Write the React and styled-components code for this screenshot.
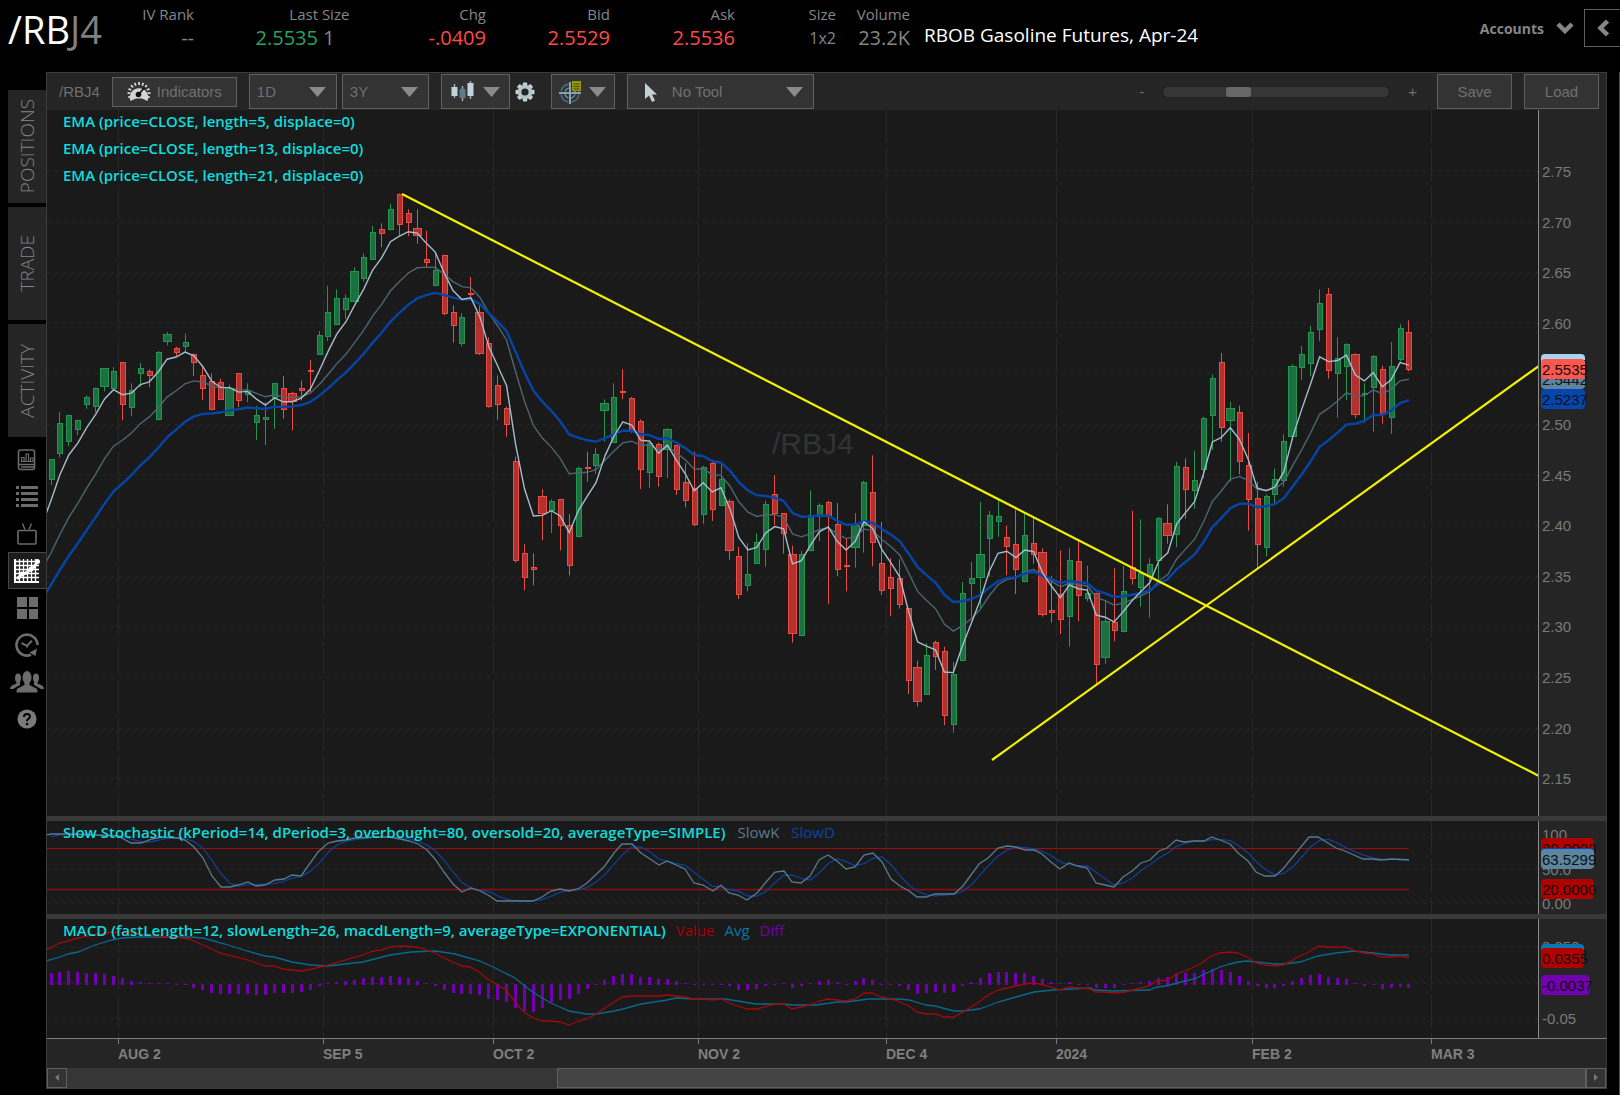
import React from "react";
import styled, { createGlobalStyle } from "styled-components";

const sans = '"Open Sans", "Noto Sans", sans-serif';
const arial = '"Liberation Sans", Arial, sans-serif';

const c = {
  panel: "#252525",
  plot: "#1a1a1a",
  line: "#3c3c3c",
  grid: "#282828",
  control: "#333333",
  edge: "#606060",
  muted: "#707070",
  label: "#868686",
  up: "#25a562",
  down: "#ff4a42",
  cyan: "#0cdede",
};

const Global = createGlobalStyle`
  *, *::before, *::after { box-sizing: border-box; }
  body { margin: 0; background: #000; font-family: ${sans}; }
  button, select, input { font: inherit; color: inherit; margin: 0; }
`;

/* ---------- page shell ---------- */

const Page = styled.div`
  display: flex;
  flex-direction: column;
  min-height: 100vh;
  background: #000;
`;

const Header = styled.header`
  display: flex;
  height: 72px;
  padding-left: 8px;
`;

const Symbol = styled.h1`
  margin: 0;
  width: 96px;
  font-size: 38px;
  line-height: 58px;
  font-weight: 400;
  color: #fff;
  span { color: #808080; }
`;

const Quote = styled.div`
  display: flex;
  flex-direction: column;
  padding-top: 4px;
  width: ${(p) => p.$w}px;
  text-align: ${(p) => (p.$left ? "left" : "right")};
  white-space: nowrap;
`;

const QuoteLabel = styled.span`
  font-size: 15px;
  line-height: 20px;
  color: ${c.label};
`;

const QuoteValue = styled.span`
  font-size: ${(p) => (p.$small ? 16 : 20)}px;
  line-height: 28px;
  color: ${(p) => p.$color || c.label};
`;

const Instrument = styled.p`
  margin: 0 auto 0 14px;
  font-size: 19px;
  line-height: 70px;
  color: #fff;
  white-space: nowrap;
`;

const AccountsButton = styled.button`
  display: flex;
  align-items: center;
  gap: 12px;
  height: 56px;
  padding: 0;
  margin-right: 10px;
  border: 0;
  background: none;
  color: ${c.label};
  font-weight: 700;
  font-size: 14px;
`;

const CollapseButton = styled.button`
  display: grid;
  place-items: center;
  width: 36px;
  height: 38px;
  margin-top: 9px;
  padding: 0;
  border: 1px solid ${c.edge};
  border-right: 0;
  background: #000;
  color: ${c.label};
`;

const Body = styled.div`
  display: flex;
  flex: 1;
  align-items: flex-start;
  padding-right: 12px;
  border-right: 1px solid #505050;
`;

/* ---------- left rail ---------- */

const Rail = styled.nav`
  display: flex;
  flex-direction: column;
  width: 46px;
  padding: 18px 0 0 8px;
`;

const RailTab = styled.button`
  height: 113px;
  margin-bottom: 4px;
  padding: 0;
  border: 0;
  background: #252525;
  color: ${c.label};
  font-size: 19px;
  font-weight: 300;
  display: grid;
  place-items: center;
  span { writing-mode: vertical-rl; transform: rotate(180deg); line-height: 24px; }
`;

const RailIcons = styled.div`
  display: flex;
  flex-direction: column;
`;

const RailIcon = styled.button`
  display: grid;
  place-items: center;
  height: 37px;
  padding: 0 2px 0 0;
  border: 1px solid ${(p) => (p.$active ? "#484848" : "transparent")};
  border-right: 0;
  background: ${(p) => (p.$active ? "#1c1c1c" : "none")};
  color: ${(p) => (p.$active ? "#fff" : "#6c6c6c")};
`;

/* ---------- chart panel ---------- */

const Panel = styled.main`
  flex: 1;
  min-width: 0;
  background: ${c.panel};
  border: 1px solid ${c.line};
`;

const Toolbar = styled.div`
  display: flex;
  align-items: center;
  height: 37px;
  padding: 0 7px 0 12px;
  color: ${c.muted};
  font-family: ${arial};
  font-size: 15px;
`;

const Group = styled.div`
  display: flex;
  align-items: center;
  gap: ${(p) => p.$gap || 5}px;
  margin-right: ${(p) => p.$end || 12}px;
`;

const ToolButton = styled.button`
  display: flex;
  align-items: center;
  justify-content: center;
  gap: 6px;
  width: ${(p) => p.$w}px;
  height: ${(p) => (p.$low ? 30 : 35)}px;
  padding: 0;
  border: 1px solid ${c.edge};
  background: ${c.control};
`;

const PlainButton = styled.button`
  display: grid;
  padding: 0;
  border: 0;
  background: none;
`;

const SelectBox = styled.label`
  display: grid;
  align-items: center;
  width: ${(p) => p.$w}px;
  height: 35px;
  border: 1px solid ${c.edge};
  background: ${c.control};
  > * { grid-area: 1 / 1; }
  > svg { pointer-events: none; }
`;

const Select = styled.select`
  width: 100%;
  height: 100%;
  padding: 0 0 0 ${(p) => p.$pad || 7}px;
  border: 0;
  background: none;
  appearance: none;
  outline: 0;
`;

const Caret = styled.svg`
  justify-self: end;
  margin-right: ${(p) => p.$right || 0}px;
`;

const LeadIcon = styled.svg`
  margin-left: 14px;
`;

const Zoom = styled.div`
  display: flex;
  align-items: center;
  gap: 20px;
  margin: 0 20px 0 auto;
`;

const Range = styled.input`
  appearance: none;
  width: 224px;
  height: 10px;
  border-radius: 4px;
  background: #363636;
  &::-webkit-slider-thumb {
    appearance: none;
    width: 25px;
    height: 10px;
    border-radius: 3px;
    background: #686868;
  }
`;

const Pane = styled.section`
  display: flex;
  border-bottom: ${(p) => (p.$last ? "1px solid #7c7c7c" : "5px solid #393939")};
`;

const Plot = styled.div`
  position: relative;
  flex: 1;
  min-width: 0;
  background: ${c.plot};
`;

const PlotSvg = styled.svg`
  display: block;
  width: 100%;
`;

const Axis = styled.svg`
  display: block;
  width: 68px;
  border-left: 1px solid #8a8a8a;
  background: ${c.panel};
  font-family: ${arial};
  font-size: 15px;
`;

const Legend = styled.div`
  position: absolute;
  left: 16px;
  top: ${(p) => (p.$tight ? 0 : -2)}px;
  font-size: 15px;
  line-height: ${(p) => (p.$tight ? 22 : 27)}px;
  font-weight: 600;
  color: ${c.cyan};
  pointer-events: none;
  white-space: nowrap;
`;

const LegendRow = styled.div`
  display: flex;
  gap: ${(p) => p.$gap || 10}px;
`;

const SeriesName = styled.span`
  font-weight: 400;
  color: ${(p) => p.$color};
`;

const TimeAxis = styled.svg`
  display: block;
  width: 100%;
  font-family: ${arial};
  font-size: 14px;
  font-weight: 700;
`;

const Scrollbar = styled.div`
  display: flex;
  height: 20px;
  background: #363636;
`;

const ScrollArrow = styled.button`
  display: grid;
  place-items: center;
  width: 20px;
  padding: 0;
  border: 1px solid ${c.edge};
  background: ${c.control};
`;

const ScrollThumb = styled.div`
  width: 66%;
  margin-left: auto;
  border: 1px solid ${c.edge};
  background: #444;
`;

/* ---------- market data, in canvas units ---------- */

const LEFT = 47;
const barX = (i) => 51 + i * 8.934;

// direction, high, body top, body bottom, low
const candles = [
  ["u",459.4,459.4,480.4,485],["u",412,423.3,453.8,457.6],["u",414.8,414.8,442.2,446.4],["u",419.7,419.7,430.3,435.2],
  ["u",395.5,396.9,404.7,408.9],["u",387.5,387.5,406.8,412.4],["u",368.2,368.2,386.8,391.3],["u",367.1,371.3,388.9,390.6],
  ["d",361.9,361.9,404.7,420.4],["u",383.3,389.9,407.5,416.2],["u",362.9,367.5,373.8,387.1],["d",369.2,371,376.2,387.1],
  ["u",351,352.4,420.4,420.4],["u",332,333.5,342.2,345.4],["d",346.8,348.2,352.7,356.3],["u",333.5,342.2,347.1,352],
  ["d",353.5,353.5,363.3,376.2],["d",367.1,374.8,388.5,400.1],["d",373.4,380.5,410.3,410.3],["d",378.7,382.2,399.8,399.8],
  ["u",384.7,387.8,416.2,416.2],["d",373.4,373.4,401.2,407.1],["u",383.3,389.9,394.8,402.2],["u",405.7,414.8,422.6,440.1],
  ["u",402.2,417.3,420.4,445],["u",383.3,383.3,397.6,428.9],["d",375.9,387.5,409.6,418.7],["d",391.7,393.4,401.5,430.3],
  ["d",380.5,387.5,391,400.5],["d",359.8,370.3,372.4,392.7],["u",331,334.5,354.9,354.9],["u",285.8,312.4,337.3,341.2],
  ["u",289.3,298.4,324.7,324.7],["u",294.5,298.4,310,318.7],["u",267.2,270.7,302.2,302.2],["u",253.5,257.3,278.7,281.5],
  ["u",225.8,232.4,259.8,259.8],["d",223.3,229.3,233.5,247.2],["u",203.7,209.3,230.3,230.3],["d",193.5,193.5,225.1,235.6],
  ["d",209.3,213.3,222.7,236.3],["d",209.3,228.3,236.3,243.7],["d",230.7,259.3,262.7,266.7],["u",254,270.3,286.3,286.3],
  ["d",254.7,254.7,313.7,315.3],["d",305.3,312.3,326.3,342.7],["u",313,317,343.7,346.3],["d",277,293,295,297.3],
  ["d",305.7,312.3,353.7,355],["d",337.3,343.3,406.7,407.7],["d",375.3,384.7,405,420],["d",406.7,408.3,425.3,436.7],
  ["d",456.7,460.7,561.3,562.7],["d",544.3,553.3,577.7,590.3],["d",553.3,567,570.3,585.3],["d",489.3,495.7,514.3,540.3],
  ["u",499.3,501.3,511.3,533],["d",499.3,499.3,526.3,550.3],["d",514.3,525.3,566.3,575.3],["u",466.7,468.3,537.3,537.3],
  ["d",451.7,467,467.6,481.7],["u",448,454.3,466.3,474],["u",399.3,403.3,411.3,441.7],["u",383.3,397.3,442.7,442.7],
  ["d",369.3,390.7,392.7,399.3],["d",397,398.3,431.3,432.7],["d",419.3,420.7,470.3,489],["u",440,443.3,473.3,487.7],
  ["d",442.7,444.3,477.3,486.7],["u",428,429.3,450,478],["d",444.7,444.7,489.7,495],["d",463.3,482.3,501.3,507.3],
  ["d",451.7,488.3,524.7,526.3],["u",465.7,467,514.7,523.7],["d",459.7,463.3,510.3,521],["u",463.3,479.3,506.3,506.3],
  ["d",499.3,500.7,551.3,559.7],["d",546.7,555.7,595,599],["u",543.3,574.3,586.3,591.3],["u",533.3,542.3,563.7,563.7],
  ["u",500.7,504.3,550.3,566.7],["d",475.3,494.3,513.7,525],["d",513.3,513.3,533.7,553.7],["d",545.7,554.3,633.7,642.7],
  ["u",551,554.3,636.3,636.3],["u",490.3,514.7,551.3,551.3],["u",503.3,504.7,517.3,541.3],["d",500.7,502.3,517.3,604],
  ["d",503,524.3,570,576.3],["d",538.7,564.7,567.3,591.3],["u",513,524.7,548.3,567.7],["u",480.7,482.3,526,552.7],
  ["d",455.3,492.3,542.7,566.3],["d",522,563.3,591.3,595],["d",558.3,577.3,588.7,616.3],["d",559.3,578.3,605.3,608.7],
  ["d",608.3,608.3,681.3,694],["d",660.7,667.3,702.3,706.7],["u",643.3,654.7,695,695],["d",640.7,642.3,657.3,670],
  ["d",646.7,650.7,716.3,725.3],["u",662,673.7,725,732.7],["u",582,593.3,661.3,661.3],["u",562,578.3,584.3,617.3],
  ["u",502,553.7,578.3,609.3],["u",511,514.7,538.7,576.7],["u",499,516.3,522.3,536.7],["d",525.7,537.3,547.3,575.3],
  ["d",509.3,543.7,570.3,594],["u",513,534.7,582.3,582.3],["d",516,542.7,555,563.7],["d",548.3,552.3,615.3,616.7],
  ["d",575.7,609.7,613.3,622.7],["d",550.3,594.3,620,634],["u",548.3,559.7,617.3,646.7],["d",539.7,561.3,596.3,621.3],
  ["u",565.7,592.7,598.7,601.3],["d",592.7,592.7,665.3,683.7],["u",601.3,621.3,657.7,663.7],["d",568.3,622.3,631.3,641.3],
  ["u",565.7,591.3,632.3,632.3],["d",510.7,567.3,578.7,584.7],["u",519.3,573.3,587.7,606.7],["u",558.3,564.3,577.3,617.7],
  ["u",516.7,518.3,561.3,581.7],["d",504.3,523.3,536.3,543.7],["u",461.7,465.7,534.7,547.3],["d",458.3,467.3,490,518.7],
  ["u",450.7,479.7,491.3,508.7],["u",416.7,418.3,470,478.3],["u",374.3,378.3,415.7,450],["d",353,362.3,428.3,441.7],
  ["u",401.7,408.3,420.7,481.7],["d",405.7,412.3,461.7,474.3],["d",433,464.7,499.7,530.7],["d",481.7,498.3,545.3,568.3],
  ["u",494.3,496.3,548.3,556.7],["u",468.3,479.3,494.7,502.7],["u",434.3,441.3,481.3,486.7],["u",364.3,366.3,437.3,440.7],
  ["u",346,354.3,367.7,380],["u",325.7,332.3,363.7,376.3],["u",289.3,303.3,329.7,341.3],["d",288,294.3,371.3,378.7],
  ["u",337,358.3,373.7,417.7],["u",343.3,344.3,367.3,400.3],["d",353.3,354.3,414.7,418.3],["u",383.3,392.7,395.3,422.7],
  ["u",355,356.3,387.7,431.7],["d",365.7,369.3,414.7,423.7],["u",342,366.3,417.7,433.7],["u",324.3,328.3,360,361.7],
  ["d",320.3,332.3,370.3,371.3],
];

const histogram = [
  11,12,13,12,11,11,10,8,6,3,2,1,1,1,-1,-1,-4,-6,-9,-10,-10,-10,-10,-11,-11,-9,-9,-9,-8,-6,-2,1,2,3,4,6,7,7,8,7,6,3,1,-2,-6,
  -9,-10,-10,-11,-15,-16,-18,-24,-27,-28,-24,-18,-16,-15,-10,-5,-1,4,8,10,10,7,7,5,5,3,1,-1,-1,-1,-1,-2,-6,-6,-5,-2,-1,1,-4,
  -2,1,3,4,2,-1,3,6,4,-1,-1,-2,-6,-10,-9,-8,-9,-8,-2,2,6,11,12,12,11,11,8,5,2,1,2,-1,-1,-4,-4,-4,-1,1,2,3,6,7,10,11,11,14,15,
  14,12,8,3,-2,-4,-4,-2,3,6,9,10,7,6,5,1,-2,-1,-5,-4,-3,-4,
];

const macdValue = [
  [46,950],[60,943],[78,938],[93,935],[112,932],[131,933],[155,936],[174,937],[189,939],[203,945],[220,953],[248,960],[265,966],
  [274,966],[283,969],[302,971],[312,969],[324,966],[345,960],[363,955],[373,951],[382,950],[390,947],[403,946],[417,947],[435,953],
  [444,958],[462,966],[470,967],[479,972],[489,980],[506,990],[515,1002],[524,1012],[533,1018],[542,1021],[551,1021],[560,1022],
  [569,1025],[578,1021],[587,1019],[596,1014],[605,1008],[614,1002],[623,997],[632,996],[659,996],[667,995],[685,997],[694,999],
  [703,999],[713,1000],[721,999],[729,1003],[738,1006],[747,1009],[757,1009],[775,1004],[784,1004],[792,1009],[801,1007],[810,1005],
  [819,1001],[828,999],[846,1001],[855,999],[864,993],[872,993],[881,997],[891,999],[900,1002],[909,1006],[917,1012],[926,1014],
  [935,1014],[944,1017],[954,1017],[963,1012],[979,1002],[988,995],[998,990],[1007,988],[1016,986],[1024,984],[1034,983],[1044,985],
  [1060,990],[1069,987],[1090,989],[1095,992],[1104,992],[1114,993],[1125,992],[1133,990],[1149,986],[1157,981],[1168,980],
  [1176,974],[1185,971],[1202,963],[1211,956],[1220,953],[1230,952],[1238,953],[1247,957],[1256,963],[1265,965],[1275,966],
  [1283,965],[1300,956],[1309,952],[1318,946],[1328,947],[1346,947],[1355,951],[1363,953],[1373,954],[1381,957],[1392,957],
  [1400,956],[1409,958],
];

const macdAvg = [
  [46,961],[60,957],[68,954],[78,952],[95,945],[112,940],[122,938],[140,937],[190,937],[203,938],[225,944],[247,951],[265,956],
  [274,957],[292,962],[311,965],[328,966],[345,964],[363,962],[390,955],[411,952],[435,951],[455,954],[480,961],[495,968],[515,978],
  [530,990],[542,998],[551,1003],[560,1007],[569,1011],[587,1014],[596,1014],[614,1011],[623,1009],[641,1004],[667,1000],[676,998],
  [694,999],[725,999],[738,1001],[756,1004],[784,1004],[792,1005],[816,1005],[837,1002],[846,1002],[869,999],[900,999],[909,1000],
  [926,1005],[935,1006],[954,1011],[963,1011],[979,1009],[988,1006],[998,1002],[1016,997],[1034,992],[1053,990],[1090,988],
  [1095,990],[1114,991],[1149,990],[1157,987],[1166,986],[1185,981],[1194,979],[1211,971],[1220,967],[1230,964],[1238,962],
  [1247,961],[1256,962],[1275,964],[1283,964],[1300,962],[1318,956],[1336,953],[1354,951],[1373,953],[1390,955],[1409,955],
];

const slowK = [
  [28,842],[46,835],[51,834],[70,834],[118,836],[131,843],[141,843],[152,839],[162,837],[178,838],[185,840],[194,847],[203,858],
  [212,876],[221,887],[230,887],[238,885],[248,882],[256,886],[265,885],[275,880],[284,879],[292,875],[301,876],[318,852],[328,843],
  [337,841],[346,840],[355,838],[375,837],[390,837],[400,839],[409,841],[418,844],[427,850],[435,859],[444,872],[453,884],[462,892],
  [471,888],[480,891],[488,895],[497,901],[533,901],[542,897],[551,891],[560,889],[569,891],[578,889],[587,883],[604,867],[614,853],
  [622,844],[632,844],[641,853],[650,859],[659,865],[667,861],[685,869],[694,883],[703,885],[713,891],[721,885],[729,893],[738,895],
  [747,900],[757,893],[766,882],[775,872],[784,871],[792,882],[801,883],[810,876],[819,860],[828,855],[837,861],[846,869],[855,867],
  [864,855],[873,853],[882,862],[891,879],[900,886],[909,891],[917,897],[926,897],[935,894],[954,894],[963,886],[971,875],[979,864],
  [988,858],[998,848],[1007,846],[1016,847],[1025,850],[1034,850],[1042,854],[1051,862],[1060,869],[1069,863],[1078,866],[1087,868],
  [1096,883],[1105,885],[1114,887],[1123,877],[1132,871],[1141,863],[1150,860],[1159,851],[1167,848],[1176,840],[1184,842],[1194,841],
  [1204,841],[1212,837],[1220,840],[1230,844],[1238,853],[1248,861],[1256,872],[1265,876],[1275,876],[1283,869],[1309,837],[1318,837],
  [1328,843],[1336,848],[1345,851],[1363,859],[1373,859],[1381,860],[1392,859],[1409,860],
];

const months = [
  [118, "AUG 2"], [323, "SEP 5"], [493, "OCT 2"], [698, "NOV 2"],
  [886, "DEC 4"], [1056, "2024"], [1252, "FEB 2"], [1431, "MAR 3"],
];

/* ---------- series helpers ---------- */

const toPoints = (pts) => pts.map(([x, y]) => `${x.toFixed(1)},${y.toFixed(1)}`).join(" ");

// A virtual bar before the first one carries each average to the plot's left edge.
function ema(length, seed, before) {
  const k = 2 / (length + 1);
  let prev = seed;
  const pts = [[barX(0) - 5, before], [barX(0), seed]];
  for (let i = 1; i < candles.length; i++) {
    const [dir, , top, bottom] = candles[i];
    const close = dir === "u" ? top : bottom;
    prev += k * (close - prev);
    pts.push([barX(i), prev]);
  }
  return toPoints(pts);
}

function sample(series, x) {
  const n = series.findIndex((p) => p[0] >= x);
  if (n <= 0) return n === 0 ? series[0][1] : series[series.length - 1][1];
  const [x0, y0] = series[n - 1];
  const [x1, y1] = series[n];
  return y0 + ((y1 - y0) * (x - x0)) / (x1 - x0);
}

const slowD = candles.map((_, i) => {
  const x = barX(i);
  return [x, (sample(slowK, x) + sample(slowK, x - 9) + sample(slowK, x - 18)) / 3];
});

/* ---------- chart parts ---------- */

function Grid({ rows, top, height }) {
  return (
    <g stroke={c.grid}>
      {rows.map((y) => (
        <line key={y} x1={LEFT} x2="4000" y1={y} y2={y} strokeDasharray="3 5" />
      ))}
      {months.map(([x]) => (
        <line key={x} x1={x + 0.5} x2={x + 0.5} y1={top} y2={top + height} strokeDasharray="33 5" />
      ))}
    </g>
  );
}

function Candle({ i, data }) {
  const [dir, high, top, bottom, low] = data;
  const x = Math.round(barX(i) - 0.5);
  const w = i % 7 === 6 ? 8 : 5;
  const y = Math.round(top);
  const h = Math.max(1, Math.round(bottom) - y - 1);
  const edge = dir === "u" ? "#239551" : "#e84c45";
  const fill = dir === "u" ? "#1c7040" : "#b3302c";
  return (
    <g stroke={edge}>
      <line x1={x + 0.5} x2={x + 0.5} y1={high} y2={low} />
      <rect x={x + 0.5 - Math.floor(w / 2)} y={y + 0.5} width={w} height={h} fill={fill} />
    </g>
  );
}

function Tag({ y, w, fill, children }) {
  return (
    <g>
      <rect x="2" y={y - 10} width={w} height="20" rx="4" fill={fill} />
      <text x="3" y={y + 6} fill="#101010">{children}</text>
    </g>
  );
}

const AxisText = ({ y, children }) => (
  <text x="3" y={y + 5} fill="#7a7a7a">{children}</text>
);

const priceRows = Array.from({ length: 13 }, (_, i) => 171 + i * 50.6);

function PricePane() {
  const top = 110;
  const height = 706;
  return (
    <Pane>
      <Plot>
        <PlotSvg height={height} role="img" aria-label="/RBJ4 price chart">
          <g transform={`translate(${-LEFT} ${-top})`} fill="none">
            <Grid rows={priceRows.map((y) => Math.round(y) + 0.5)} top={top} height={height} />
            <text x="772" y="454" fill="#333" fontFamily={arial} fontSize="30">/RBJ4</text>
            {candles.map((d, i) => <Candle key={i} i={i} data={d} />)}
            <polyline points={ema(13, 553, 562)} stroke="#4c6672" strokeWidth="1.4" />
            <polyline points={ema(21, 584.6, 593)} stroke="#0645a8" strokeWidth="2.4" />
            <polyline points={ema(5, 500.4, 514)} stroke="#a5bccb" strokeWidth="1.4" />
            <line x1="402" y1="194" x2="1638" y2="826.7" stroke="#f2f200" strokeWidth="2.2" />
            <line x1="992" y1="760" x2="1638" y2="294.5" stroke="#f2f200" strokeWidth="2.2" />
          </g>
        </PlotSvg>
        <Legend>
          <LegendRow>EMA (price=CLOSE, length=5, displace=0)</LegendRow>
          <LegendRow>EMA (price=CLOSE, length=13, displace=0)</LegendRow>
          <LegendRow>EMA (price=CLOSE, length=21, displace=0)</LegendRow>
        </Legend>
      </Plot>
      <Axis height={height}>
        {priceRows.map((y, i) => i !== 4 && (
          <AxisText key={y} y={Math.round(y) - top + 1}>{(2.75 - i * 0.05).toFixed(2)}</AxisText>
        ))}
        <Tag y={254} w={44} fill="#a9d3f0">2.5583</Tag>
        <Tag y={269} w={44} fill="#5a84a0">2.5442</Tag>
        <Tag y={289} w={44} fill="#0546ae">2.5237</Tag>
        <Tag y={259} w={44} fill="#ff564d">2.5535</Tag>
      </Axis>
    </Pane>
  );
}

function StochasticPane() {
  const top = 821;
  const height = 93;
  return (
    <Pane>
      <Plot>
        <PlotSvg height={height} role="img" aria-label="Slow Stochastic">
          <g transform={`translate(${-LEFT} ${-top})`} fill="none">
            <Grid rows={[834.5, 868.5, 903.5]} top={top} height={height} />
            <line x1={LEFT} x2="1409" y1="848.5" y2="848.5" stroke="#a50a0a" />
            <line x1={LEFT} x2="1409" y1="889.5" y2="889.5" stroke="#8c1010" strokeWidth="1.5" />
            <polyline points={toPoints(slowD)} stroke="#0f3f94" strokeWidth="1.3" />
            <polyline points={toPoints(slowK)} stroke="#567b90" strokeWidth="1.3" />
          </g>
        </PlotSvg>
        <Legend $tight>
          <LegendRow $gap={12}>
            Slow Stochastic (kPeriod=14, dPeriod=3, overbought=80, oversold=20, averageType=SIMPLE)
            <SeriesName $color="#567b90">SlowK</SeriesName>
            <SeriesName $color="#0546a8">SlowD</SeriesName>
          </LegendRow>
        </Legend>
      </Plot>
      <Axis height={height}>
        <AxisText y={14}>100</AxisText>
        <AxisText y={49}>50.0</AxisText>
        <AxisText y={83}>0.00</AxisText>
        <Tag y={27} w={53} fill="#b00000">80.0000</Tag>
        <Tag y={37} w={53} fill="#0546ae">64.0221</Tag>
        <Tag y={38} w={53} fill="#5a84a0">63.5299</Tag>
        <Tag y={68} w={53} fill="#b00000">20.0000</Tag>
      </Axis>
    </Pane>
  );
}

function MacdPane() {
  const top = 919;
  const height = 119;
  return (
    <Pane $last>
      <Plot>
        <PlotSvg height={height} role="img" aria-label="MACD">
          <g transform={`translate(${-LEFT} ${-top})`} fill="none">
            <Grid rows={[947.5, 983.5, 1018.5]} top={top} height={height} />
            {histogram.map((v, i) => (
              <rect
                key={i}
                x={Math.round(barX(i) - 0.5) - 1}
                y={v > 0 ? 984 - v : 984}
                width="3"
                height={Math.abs(v) + (v > 2 ? 1 : 0)}
                fill="#7200b0"
              />
            ))}
            <polyline points={toPoints(macdAvg)} stroke="#08698f" strokeWidth="1.3" />
            <polyline points={toPoints(macdValue)} stroke="#a00a0a" strokeWidth="1.3" />
          </g>
        </PlotSvg>
        <Legend $tight>
          <LegendRow $gap={10}>
            MACD (fastLength=12, slowLength=26, macdLength=9, averageType=EXPONENTIAL)
            <SeriesName $color="#a80000">Value</SeriesName>
            <SeriesName $color="#0a74a4">Avg</SeriesName>
            <SeriesName $color="#7200b0">Diff</SeriesName>
          </LegendRow>
        </Legend>
      </Plot>
      <Axis height={height}>
        <AxisText y={28}>0.050</AxisText>
        <AxisText y={100}>-0.05</AxisText>
        <Tag y={35} w={43} fill="#0878b0">0.0392</Tag>
        <Tag y={39} w={43} fill="#b00000">0.0355</Tag>
        <Tag y={66} w={49} fill="#7200b0">-0.0037</Tag>
      </Axis>
    </Pane>
  );
}

/* ---------- icons ---------- */

const Icon = ({ size = 24, w = size, children, ...rest }) => (
  <svg width={w} height={size} viewBox={`0 0 ${w} ${size}`} fill="none" aria-hidden="true" {...rest}>
    {children}
  </svg>
);

const CaretIcon = ({ right }) => (
  <Caret $right={right} width="17" height="10" viewBox="0 0 17 10" aria-hidden="true">
    <path d="M0 0h17L8.500 10z" fill="#8a8a8a" />
  </Caret>
);

const teeth = Array.from({ length: 8 }, (_, i) => i * 45);

const GearIcon = () => (
  <Icon size={20}>
    <g fill="#c5d2d8">
      {teeth.map((a) => (
        <rect key={a} x="7.800" y="0.500" width="4.400" height="5" rx="1" transform={`rotate(${a} 10 10)`} />
      ))}
    </g>
    <circle cx="10" cy="10" r="5.400" stroke="#b4c4cb" strokeWidth="3.600" />
  </Icon>
);

const GaugeIcon = () => (
  <Icon size={22} w={24}>
    <path d="M3.500 20A9.200 9.200 0 1 1 20.500 20L15 17.500H9z" fill="#d4d4d8" />
    <g stroke="#d4d4d8" strokeWidth="1.800">
      {[-110, -88, -66, -44, -22, 0, 22, 44, 66, 88, 110].map((a) => (
        <path key={a} d="M12 4V1" transform={`rotate(${a} 12 12.500)`} />
      ))}
    </g>
    <path d="M11.500 13.500L18 6" stroke="#111" strokeWidth="1.800" />
    <circle cx="11.500" cy="13.500" r="2.800" fill="#111" />
  </Icon>
);

const CandlesIcon = () => (
  <Icon size={22} w={26}>
    <path d="M3.500 3v14M11.500 5v15M19.500 0v18" stroke="#9fb4be" strokeWidth="1.400" />
    <rect x="0.500" y="6" width="6" height="9" fill="#c4d3d9" />
    <rect x="8.500" y="8" width="6" height="9" fill="#5f7c88" />
    <rect x="16.500" y="2" width="6" height="13" fill="#c4d3d9" />
  </Icon>
);

const CrosshairIcon = () => (
  <Icon size={24}>
    <circle cx="11" cy="13" r="9" fill="#26343b" stroke="#4f6a76" strokeWidth="1.600" strokeDasharray="11 3.130" strokeDashoffset="-1.600" />
    <circle cx="11" cy="13" r="5.200" stroke="#6f8a95" strokeWidth="1.400" strokeDasharray="5.400 2.770" strokeDashoffset="-1.400" />
    <path d="M11 2v22M0 13h22" stroke="#8aa4ae" strokeWidth="2" />
    <rect x="13" y="1" width="9" height="10" fill="#97970a" />
    <path d="M14.500 4h6M14.500 6.500h6M14.500 9h6" stroke="#4a4a05" />
  </Icon>
);

const NewsIcon = () => (
  <Icon size={22} w={20}>
    <rect x="1.500" y="1" width="16" height="19.500" rx="2" stroke="currentColor" strokeWidth="1.600" />
    <path d="M1.500 15.500h16M4 18h14" stroke="currentColor" strokeWidth="1.400" />
    <path d="M4.500 12.500v-4h2.500v4zM9 12.500V5h2.500v7.500zM13.500 12.500V9H16v3.500zM4 12.500h12" stroke="currentColor" strokeWidth="1.200" />
  </Icon>
);

const ListIcon = () => (
  <Icon size={22}>
    {[0, 6, 12, 18].map((y) => (
      <path key={y} d={`M0 ${y + 1.5}h3M5 ${y + 1.5}h19`} stroke="currentColor" strokeWidth="3" />
    ))}
  </Icon>
);

const TvIcon = () => (
  <Icon size={22} w={20}>
    <rect x="1" y="7.500" width="18" height="13.500" rx="1" stroke="currentColor" strokeWidth="1.600" />
    <path d="M5.500 0.500L8 6.500M14.500 0.500L12 6.500" stroke="currentColor" strokeWidth="1.400" />
  </Icon>
);

const ChartIcon = () => (
  <Icon size={24} w={26}>
    <path d="M1 0v24M0 23h25" stroke="currentColor" strokeWidth="2.200" />
    <path d="M5.500 0v22M9.500 0v22M13.500 0v22M17.500 0v22M21.500 0v22M2 2.500h23M2 6.500h23M2 10.500h23M2 14.500h23M2 18.500h23" stroke="currentColor" strokeWidth="1.300" />
    <path d="M3 20l5-5 4-1 5-4 3-2 4-6" stroke="currentColor" strokeWidth="3" />
    <circle cx="8" cy="15" r="2.500" fill="currentColor" />
    <circle cx="17" cy="10" r="2.500" fill="currentColor" />
    <circle cx="23.500" cy="2.500" r="2.500" fill="currentColor" />
  </Icon>
);

const TilesIcon = () => (
  <Icon size={22}>
    <path d="M1 0h10v10H1zM13 0h10v10H13zM1 12h10v10H1zM13 12h10v10H13z" fill="currentColor" />
  </Icon>
);

const HistoryIcon = () => (
  <Icon size={24}>
    <path d="M22.500 12A10.500 10.500 0 1 0 16 21.800" stroke="currentColor" strokeWidth="2.600" />
    <path d="M6.500 10l5.500 2.800 5-5M12 12.500v2" stroke="currentColor" strokeWidth="2" />
    <path d="M22 15.500l-1.500 7.500-6-3.500z" fill="currentColor" />
  </Icon>
);

const PeopleIcon = () => (
  <Icon size={22} w={36}>
    <g fill="currentColor">
      <ellipse cx="18" cy="6.500" rx="4.500" ry="6.500" />
      <path d="M15.500 10h5v4l7 3.500q1 .5 1 4h-21q0-3.500 1-4l7-3.500z" />
      <ellipse cx="9" cy="7" rx="3" ry="4.500" />
      <ellipse cx="27" cy="7" rx="3" ry="4.500" />
      <path d="M7.500 10h3.500v4l-7 4H1q0-3 2-3.500l4.500-2zM28.500 10H25v4l7 4h3q0-3-2-3.500l-4.500-2z" />
    </g>
  </Icon>
);

const HelpIcon = () => (
  <Icon size={20}>
    <circle cx="10" cy="10" r="9.600" fill="#7a7a7a" />
    <path d="M7 8q0-3 3-3t3 2.600q0 1.600-2 2.600-1 .6-1 2" stroke="#000" strokeWidth="2" />
    <circle cx="10" cy="15" r="1.300" fill="#000" />
  </Icon>
);

const railIcons = [
  ["News", NewsIcon], ["Watchlist", ListIcon], ["Video", TvIcon], ["Charts", ChartIcon],
  ["Grid", TilesIcon], ["History", HistoryIcon], ["Follow", PeopleIcon], ["Help", HelpIcon],
];

/* ---------- app ---------- */

export default function App() {
  return (
    <Page>
      <Global />
      <Header>
        <Symbol>/RB<span>J4</span></Symbol>
        <Quote $w={90}><QuoteLabel>IV Rank</QuoteLabel><QuoteValue>--</QuoteValue></Quote>
        <Quote $w={124}><QuoteLabel>Last</QuoteLabel><QuoteValue $color={c.up}>2.5535</QuoteValue></Quote>
        <Quote $w={32} $left>
          <QuoteLabel>&nbsp;Size</QuoteLabel><QuoteValue>&nbsp;1</QuoteValue>
        </Quote>
        <Quote $w={136}><QuoteLabel>Chg</QuoteLabel><QuoteValue $color={c.down}>-.0409</QuoteValue></Quote>
        <Quote $w={124}><QuoteLabel>Bid</QuoteLabel><QuoteValue $color={c.down}>2.5529</QuoteValue></Quote>
        <Quote $w={125}><QuoteLabel>Ask</QuoteLabel><QuoteValue $color={c.down}>2.5536</QuoteValue></Quote>
        <Quote $w={101}><QuoteLabel>Size</QuoteLabel><QuoteValue $small>1x2</QuoteValue></Quote>
        <Quote $w={74}><QuoteLabel>Volume</QuoteLabel><QuoteValue>23.2K</QuoteValue></Quote>
        <Instrument>RBOB Gasoline Futures, Apr-24</Instrument>
        <AccountsButton type="button">
          Accounts
          <Icon size={12} w={18}><path d="M2 2l7 7 7-7" stroke="currentColor" strokeWidth="4.500" /></Icon>
        </AccountsButton>
        <CollapseButton type="button" aria-label="Collapse panel">
          <Icon size={18} w={12}><path d="M10.500 2l-7 7 7 7" stroke="currentColor" strokeWidth="4.500" /></Icon>
        </CollapseButton>
      </Header>

      <Body>
        <Rail>
          <RailTab type="button"><span>POSITIONS</span></RailTab>
          <RailTab type="button"><span>TRADE</span></RailTab>
          <RailTab type="button"><span>ACTIVITY</span></RailTab>
          <RailIcons>
            {railIcons.map(([name, Glyph]) => (
              <RailIcon key={name} type="button" aria-label={name} $active={name === "Charts"}>
                <Glyph />
              </RailIcon>
            ))}
          </RailIcons>
        </Rail>

        <Panel>
          <Toolbar>
            <Group $gap={12}>
              <span>/RBJ4</span>
              <ToolButton type="button" $w={125} $low><GaugeIcon />Indicators</ToolButton>
            </Group>
            <Group>
              <SelectBox $w={88}>
                <Select aria-label="Aggregation"><option>1D</option></Select>
                <CaretIcon right={10} />
              </SelectBox>
              <SelectBox $w={87}>
                <Select aria-label="Time span"><option>3Y</option></Select>
                <CaretIcon right={10} />
              </SelectBox>
            </Group>
            <Group $end={16}>
              <ToolButton type="button" $w={69} aria-label="Chart style" aria-haspopup="listbox">
                <CandlesIcon /><CaretIcon />
              </ToolButton>
              <PlainButton type="button" aria-label="Chart settings"><GearIcon /></PlainButton>
            </Group>
            <Group $gap={12}>
              <ToolButton type="button" $w={64} aria-label="Crosshair" aria-haspopup="listbox">
                <CrosshairIcon /><CaretIcon />
              </ToolButton>
              <SelectBox $w={187}>
                <Select $pad={44} aria-label="Drawing tool"><option>No Tool</option></Select>
                <LeadIcon width="18" height="22" viewBox="0 0 18 22" aria-hidden="true">
                  <path d="M3 2v16l4-3.500 3 6.500 3-1.500-3-6h5z" fill="#c4d0d6" />
                </LeadIcon>
                <CaretIcon right={10} />
              </SelectBox>
            </Group>
            <Zoom>
              <span>-</span>
              <Range type="range" min="0" max="100" defaultValue="31" aria-label="Zoom" />
              <span>+</span>
            </Zoom>
            <Group>
              <ToolButton type="button" $w={75}>Save</ToolButton>
            </Group>
            <ToolButton type="button" $w={75}>Load</ToolButton>
          </Toolbar>

          <PricePane />
          <StochasticPane />
          <MacdPane />

          <TimeAxis height="29">
            {months.map(([x, label]) => (
              <g key={label}>
                <line x1={x - LEFT + 0.5} x2={x - LEFT + 0.5} y1="0" y2="5" stroke="#7c7c7c" />
                <text x={x - LEFT} y="20" fill="#7f7f7f">{label}</text>
              </g>
            ))}
          </TimeAxis>
          <Scrollbar>
            <ScrollArrow type="button" aria-label="Scroll left">
              <Icon size={8} w={5}><path d="M4 0v7L0 3.500z" fill="#777" /></Icon>
            </ScrollArrow>
            <ScrollThumb />
            <ScrollArrow type="button" aria-label="Scroll right">
              <Icon size={8} w={5}><path d="M0 0v7l4-3.500z" fill="#777" /></Icon>
            </ScrollArrow>
          </Scrollbar>
        </Panel>
      </Body>
    </Page>
  );
}
